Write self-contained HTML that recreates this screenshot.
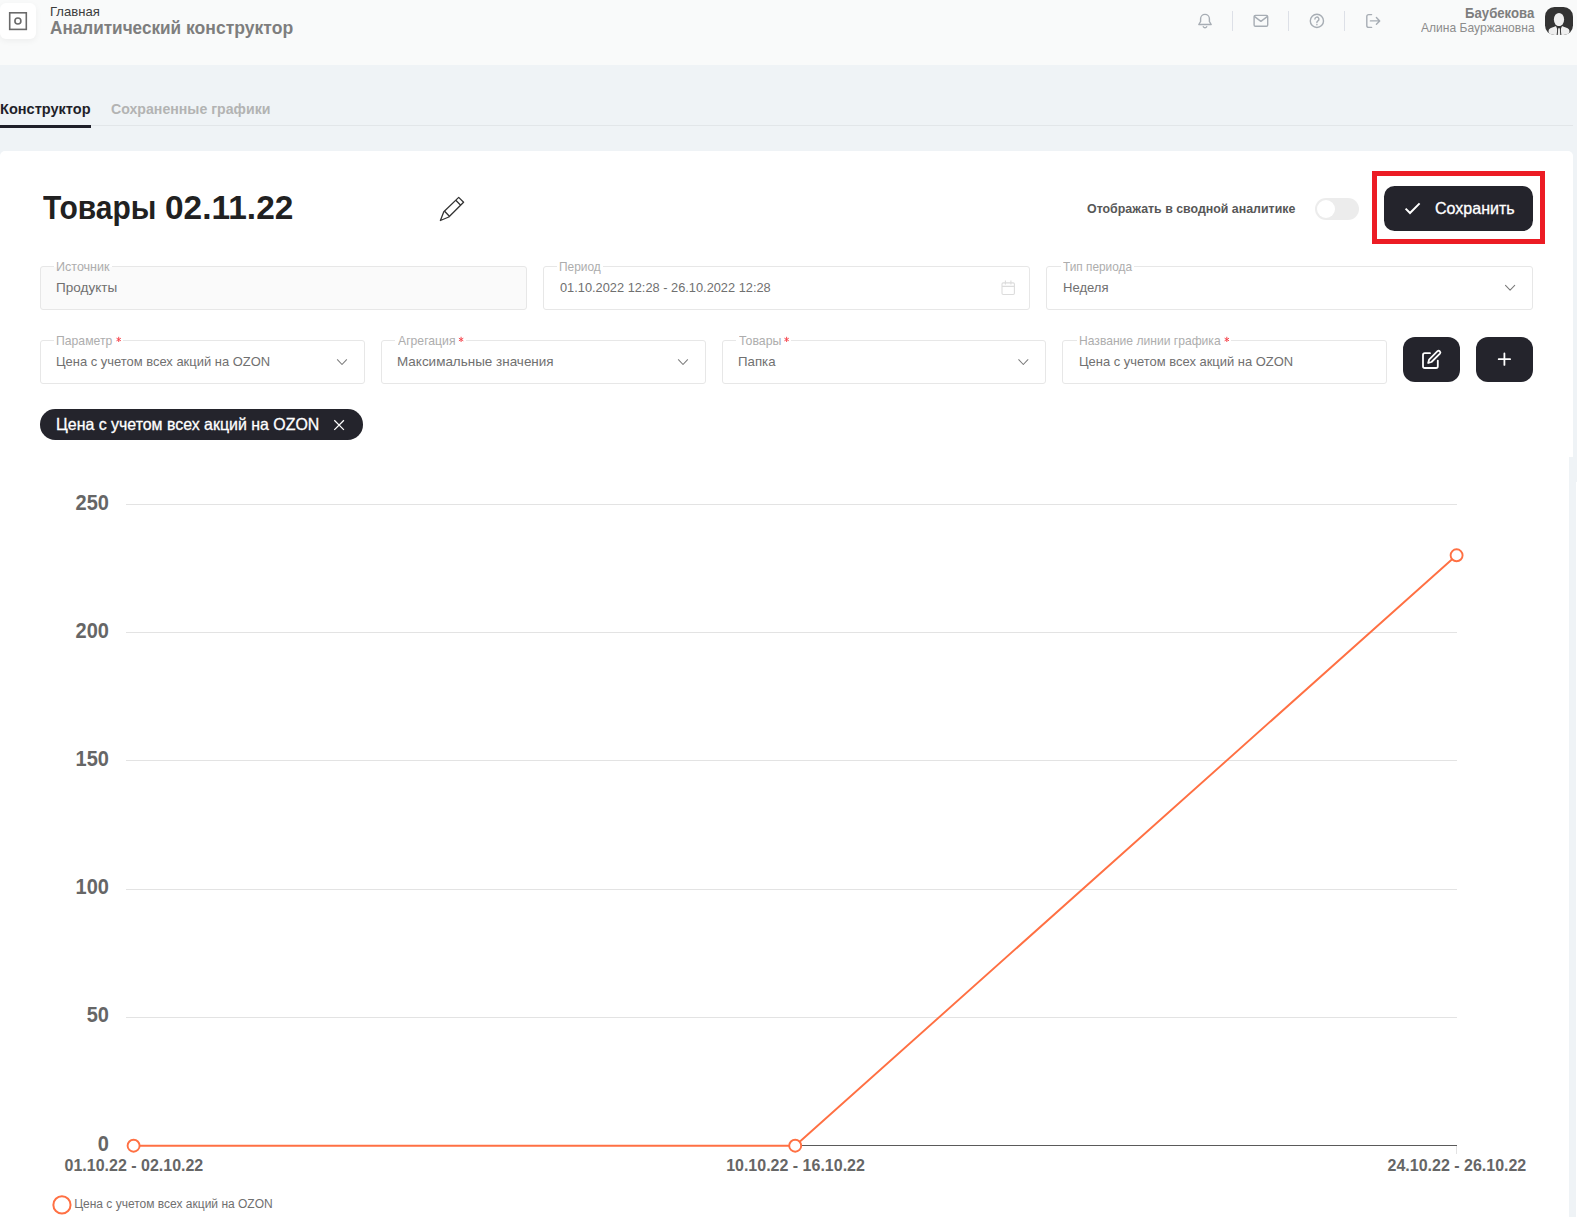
<!DOCTYPE html>
<html lang="ru">
<head>
<meta charset="utf-8">
<title>Аналитический конструктор</title>
<style>
*{box-sizing:border-box;margin:0;padding:0}
html,body{width:1577px;height:1219px;overflow:hidden}
body{position:relative;background:#eff3f6;font-family:"Liberation Sans",sans-serif;color:#666}
.abs{position:absolute}
.t{position:absolute;white-space:nowrap;line-height:1;transform-origin:0 0}
#hdr{position:absolute;left:0;top:0;width:1577px;height:65px;background:#f9fafa}
#logo{position:absolute;left:0;top:3px;width:36px;height:36px;background:#fff;border-radius:6px;box-shadow:0 2px 6px rgba(0,0,0,.05)}
.vdiv{position:absolute;top:11px;width:1px;height:20px;background:#dde0e7}
#tabline{position:absolute;left:0;top:125px;width:1573px;height:1px;background:#e2e6e9}
#tabul{position:absolute;left:0;top:125px;width:91px;height:3px;background:#1f1f29}
#card{position:absolute;left:0;top:151px;width:1573px;height:1068px;background:#fff;border-radius:5px 5px 0 0}
.fld{position:absolute;height:44px;border:1px solid #e7e7e7;border-radius:3px}
.btn{position:absolute;background:#24242c}
#ov{position:absolute;left:0;top:0;pointer-events:none}
</style>
</head>
<body>
<div id="hdr"></div>
<div id="logo"></div>
<div class="vdiv" style="left:1232px"></div>
<div class="vdiv" style="left:1288px"></div>
<div class="vdiv" style="left:1344px"></div>
<div id="tabline"></div>
<div id="tabul"></div>
<div id="card"></div>
<!-- stitched-screenshot artefacts on the right edge -->
<div class="abs" style="left:1569px;top:457px;width:8px;height:762px;background:#eff3f6"></div>
<div class="abs" style="left:1576px;top:482px;width:1px;height:737px;background:#fff"></div>

<div class="abs" style="left:1569px;top:1217px;width:8px;height:2px;background:#fff"></div>
<!-- toggle -->
<div class="abs" style="left:1315px;top:198px;width:44px;height:22px;border-radius:11px;background:#ececec"></div>
<div class="abs" style="left:1317px;top:200px;width:18px;height:18px;border-radius:9px;background:#fff"></div>
<!-- red highlight + save -->
<div class="abs" style="left:1372px;top:171px;width:173px;height:73px;border:5px solid #ec1c24"></div>
<div class="btn" style="left:1384px;top:186px;width:149px;height:45px;border-radius:10.5px"></div>
<!-- fields -->
<div class="fld" style="left:40px;top:266px;width:487px;background:#fafafa"></div>
<div class="abs" style="left:54.4px;top:263px;width:57.3px;height:7px;background:linear-gradient(#fff 50%,#fafafa 50%)"></div>
<div class="fld" style="left:543px;top:266px;width:487px;background:#fff"></div>
<div class="abs" style="left:557.4px;top:263px;width:45.4px;height:7px;background:#fff"></div>
<div class="fld" style="left:1046px;top:266px;width:487px;background:#fff"></div>
<div class="abs" style="left:1060.7px;top:263px;width:73.5px;height:7px;background:#fff"></div>
<div class="fld" style="left:40px;top:340px;width:325px;background:#fff"></div>
<div class="abs" style="left:54.4px;top:337px;width:68.2px;height:7px;background:#fff"></div>
<div class="fld" style="left:381px;top:340px;width:325px;background:#fff"></div>
<div class="abs" style="left:395.0px;top:337px;width:70.6px;height:7px;background:#fff"></div>
<div class="fld" style="left:722px;top:340px;width:324px;background:#fff"></div>
<div class="abs" style="left:735.8px;top:337px;width:55.3px;height:7px;background:#fff"></div>
<div class="fld" style="left:1062px;top:340px;width:325px;background:#fff"></div>
<div class="abs" style="left:1076.6px;top:337px;width:154.6px;height:7px;background:#fff"></div>
<!-- buttons -->
<div class="btn" style="left:1403px;top:337px;width:57px;height:45px;border-radius:12px"></div>
<div class="btn" style="left:1476px;top:337px;width:57px;height:45px;border-radius:12px"></div>
<!-- chip -->
<div class="btn" style="left:40px;top:409.2px;width:323px;height:30.5px;border-radius:15.25px"></div>

<!-- texts -->
<div class="t" style="left:50.30px;top:5.07px;font-size:13.39px;font-weight:400;color:#3c3c3c;transform:scaleX(0.9780)">Главная</div>
<div class="t" style="left:50.24px;top:18.81px;font-size:18.54px;font-weight:700;color:#7e7e7e;transform:scaleX(0.9255)">Аналитический</div>
<div class="t" style="left:185.52px;top:18.81px;font-size:18.54px;font-weight:700;color:#7e7e7e;transform:scaleX(0.9477)">конструктор</div>
<div class="t" style="left:-0.31px;top:101.59px;font-size:14.42px;font-weight:700;color:#1f1f29;transform:scaleX(1.0102)">Конструктор</div>
<div class="t" style="left:110.99px;top:101.59px;font-size:14.42px;font-weight:700;color:#b3b3b3;transform:scaleX(0.9815)">Сохраненные графики</div>
<div class="t" style="left:1464.89px;top:6.19px;font-size:14.42px;font-weight:700;color:#7e7e7e;transform:scaleX(0.9149)">Баубекова</div>
<div class="t" style="left:1420.95px;top:21.27px;font-size:13.39px;font-weight:400;color:#8c8c8c;transform:scaleX(0.9021)">Алина Бауржановна</div>
<div class="t" style="left:42.55px;top:191.62px;font-size:32.34px;font-weight:700;color:#212121;transform:scaleX(0.9271)">Товары</div>
<div class="t" style="left:164.61px;top:191.62px;font-size:32.34px;font-weight:700;color:#212121;transform:scaleX(1.0346)">02.11.22</div>
<div class="t" style="left:1087.24px;top:202.37px;font-size:13.39px;font-weight:700;color:#575757;transform:scaleX(0.9258)">Отображать в сводной аналитике</div>
<div class="t" style="left:1435.05px;top:200.15px;font-size:16.48px;font-weight:400;color:#ffffff;-webkit-text-stroke:0.3px #fff;transform:scaleX(0.9732)">Сохранить</div>
<div class="t" style="left:56.39px;top:260.94px;font-size:12.36px;font-weight:400;color:#adadad;transform:scaleX(1.0145)">Источник</div>
<div class="t" style="left:559.44px;top:260.94px;font-size:12.36px;font-weight:400;color:#adadad;transform:scaleX(0.9638)">Период</div>
<div class="t" style="left:1063.46px;top:260.94px;font-size:12.36px;font-weight:400;color:#adadad;transform:scaleX(0.9575)">Тип периода</div>
<div class="t" style="left:56.41px;top:335.14px;font-size:12.36px;font-weight:400;color:#adadad;transform:scaleX(0.9874)">Параметр</div>
<div class="t" style="left:398.00px;top:335.14px;font-size:12.36px;font-weight:400;color:#adadad;transform:scaleX(0.9865)">Агрегация</div>
<div class="t" style="left:738.55px;top:335.14px;font-size:12.36px;font-weight:400;color:#adadad;transform:scaleX(0.9982)">Товары</div>
<div class="t" style="left:1078.62px;top:335.14px;font-size:12.36px;font-weight:400;color:#adadad;transform:scaleX(0.9788)">Название линии графика</div>
<div class="t" style="left:56.26px;top:281.47px;font-size:13.39px;font-weight:400;color:#707070;transform:scaleX(1.0124)">Продукты</div>
<div class="t" style="left:559.92px;top:281.47px;font-size:13.39px;font-weight:400;color:#707070;transform:scaleX(0.9571)">01.10.2022 12:28 - 26.10.2022 12:28</div>
<div class="t" style="left:1062.60px;top:281.47px;font-size:13.39px;font-weight:400;color:#707070;transform:scaleX(0.9770)">Неделя</div>
<div class="t" style="left:56.31px;top:355.27px;font-size:13.39px;font-weight:400;color:#707070;transform:scaleX(0.9676)">Цена с учетом всех акций на OZON</div>
<div class="t" style="left:396.87px;top:355.27px;font-size:13.39px;font-weight:400;color:#707070;transform:scaleX(1.0063)">Максимальные значения</div>
<div class="t" style="left:737.79px;top:355.27px;font-size:13.39px;font-weight:400;color:#707070;transform:scaleX(0.9905)">Папка</div>
<div class="t" style="left:1078.51px;top:355.27px;font-size:13.39px;font-weight:400;color:#707070;transform:scaleX(0.9680)">Цена с учетом всех акций на OZON</div>
<div class="t" style="left:56.47px;top:416.45px;font-size:16.48px;font-weight:400;color:#ffffff;-webkit-text-stroke:0.3px #fff;transform:scaleX(0.9665)">Цена с учетом всех акций на OZON</div>
<div class="t" style="left:74.20px;top:1198.34px;font-size:12px;font-weight:400;color:#707070;transform:scaleX(1.0000)">Цена с учетом всех акций на OZON</div>

<svg id="ov" width="1577" height="1219" viewBox="0 0 1577 1219">
<!-- logo -->
<rect x="9.7" y="12.8" width="16.6" height="16.6" fill="none" stroke="#6a6a6a" stroke-width="1.6"/>
<circle cx="17.9" cy="21" r="3" fill="none" stroke="#6a6a6a" stroke-width="1.6"/>
<!-- header icons -->
<g fill="none" stroke="#a7adb4" stroke-width="1.4" stroke-linecap="round" stroke-linejoin="round">
<path d="M1198.8 24.5L1200.6 21.5V18.8a4.4 4.4 0 0 1 8.8 0V21.5L1211.2 24.5Z"/>
<path d="M1203.3 26.7a1.9 1.9 0 0 0 3.4 0"/>
<rect x="1254.1" y="15.4" width="13.6" height="10.9" rx="1.3"/>
<path d="M1254.6 16.6L1260.9 21.4L1267.2 16.6"/>
<circle cx="1316.9" cy="20.9" r="6.6"/>
<path d="M1314.9 19.1a2 2 0 1 1 3 1.7c-.7 .4-1 .8-1 1.5v.3"/>
<path d="M1316.9 24.5v.3"/>
<path d="M1371.6 14.6h-2.8a2 2 0 0 0-2 2v8.8a2 2 0 0 0 2 2h2.8"/>
<path d="M1370.4 20.9h9.2M1376.4 17.5l3.3 3.4l-3.3 3.4"/>
</g>
<!-- avatar -->
<rect x="1545" y="7" width="28" height="28" rx="9.5" fill="#333"/>
<clipPath id="av"><rect x="1545" y="7" width="28" height="28" rx="9.5"/></clipPath>
<g clip-path="url(#av)">
<ellipse cx="1559" cy="19.6" rx="5.1" ry="6.7" fill="#eee"/>
<path d="M1548.6 36v-5.2c0-1.6 1.2-2.4 3-3l4.6-1.8l2.8 9l2.8-9l4.6 1.8c1.8 .6 3 1.4 3 3V36Z" fill="#eee"/>
<path d="M1556.2 26h5.6l-1.2 2.4l.9 7.6h-5l.9-7.6Z" fill="#333"/>
<path d="M1558.2 28.2h1.6l.5 6.8h-2.6Z" fill="#eee"/>
</g>
<!-- title pencil -->
<g fill="none" stroke="#333" stroke-width="1.3" stroke-linejoin="round">
<path d="M440.4 220.5L443.8 211.8L458.7 197.4L463.6 202.3L448.8 217Z"/>
<path d="M455.8 200.3L460.7 205.2M444.6 211.2L449.4 216.2"/>
</g>
<!-- save check -->
<path d="M1405.6 208.6L1410 213L1419.6 203.4" fill="none" stroke="#fff" stroke-width="1.95"/>
<!-- calendar -->
<g fill="none" stroke="#dcdcdc" stroke-width="1.1">
<rect x="1002" y="282.9" width="12.4" height="11.6" rx="1.2"/>
<path d="M1002 286.4h12.4M1005.4 280.6v4M1010.9 280.6v4"/>
</g>
<path d="M1505.5 285.4L1510.1 290.2L1514.7 285.4" stroke="#7a7a7a" stroke-width="1.05" fill="none" stroke-linecap="round" stroke-linejoin="round"/>
<path d="M337.4 359.7L342.0 364.5L346.6 359.7" stroke="#7a7a7a" stroke-width="1.05" fill="none" stroke-linecap="round" stroke-linejoin="round"/>
<path d="M678.4 359.7L683.0 364.5L687.6 359.7" stroke="#7a7a7a" stroke-width="1.05" fill="none" stroke-linecap="round" stroke-linejoin="round"/>
<path d="M1018.7 359.7L1023.3 364.5L1027.9 359.7" stroke="#7a7a7a" stroke-width="1.05" fill="none" stroke-linecap="round" stroke-linejoin="round"/>
<path d="M118.7 336.8v5.2M116.5 338.2l4.4 2.6M120.9 338.2l-4.4 2.6" stroke="#f5434c" stroke-width="0.95" fill="none"/>
<path d="M461.1 336.8v5.2M458.9 338.2l4.4 2.6M463.3 338.2l-4.4 2.6" stroke="#f5434c" stroke-width="0.95" fill="none"/>
<path d="M786.6 336.8v5.2M784.4 338.2l4.4 2.6M788.8 338.2l-4.4 2.6" stroke="#f5434c" stroke-width="0.95" fill="none"/>
<path d="M1226.8 336.8v5.2M1224.6 338.2l4.4 2.6M1229.0 338.2l-4.4 2.6" stroke="#f5434c" stroke-width="0.95" fill="none"/>
<!-- edit & plus button icons -->
<g fill="none" stroke="#fff" stroke-width="1.8" stroke-linecap="round" stroke-linejoin="round">
<path d="M1430 353.2h-5.2a1.8 1.8 0 0 0-1.8 1.8v11.2a1.8 1.8 0 0 0 1.8 1.8h11.2a1.8 1.8 0 0 0 1.8-1.8v-5.6"/>
<path d="M1428.2 363l.9-3.4l8.4-8.4a1.7 1.7 0 0 1 2.4 2.4l-8.4 8.4Z"/>
<path d="M1504.4 353.5v11.4M1498.7 359.2h11.4"/>
</g>
<!-- chip close -->
<path d="M334.3 420.3l9.6 9.6M343.9 420.3l-9.6 9.6" stroke="#fff" stroke-width="1.25" fill="none"/>
<!-- chart -->

<rect x="126" y="504" width="1331" height="1" fill="#e3e3e3"/>
<rect x="126" y="632" width="1331" height="1" fill="#e3e3e3"/>
<rect x="126" y="760" width="1331" height="1" fill="#e3e3e3"/>
<rect x="126" y="889" width="1331" height="1" fill="#e3e3e3"/>
<rect x="126" y="1017" width="1331" height="1" fill="#e3e3e3"/>
<rect x="127" y="1145" width="1330" height="1" fill="#5a5a5a"/>
<rect x="1456" y="1146" width="1" height="8" fill="#e3e3e3"/>
<polyline points="133.6,1145.7 795.2,1145.7 1456.6,555.3" fill="none" stroke="#ff7043" stroke-width="1.9" stroke-linejoin="round"/>
<circle cx="133.6" cy="1145.7" r="6" fill="#fff" stroke="#ff7043" stroke-width="1.9"/>
<circle cx="795.2" cy="1145.7" r="6" fill="#fff" stroke="#ff7043" stroke-width="1.9"/>
<circle cx="1456.6" cy="555.3" r="6" fill="#fff" stroke="#ff7043" stroke-width="1.9"/>
<g font-family="Liberation Sans, sans-serif">
<text transform="translate(108.9 509.5) scale(1 1.09)" text-anchor="end" font-size="20" font-weight="700" fill="#666">250</text>
<text transform="translate(108.9 637.7) scale(1 1.09)" text-anchor="end" font-size="20" font-weight="700" fill="#666">200</text>
<text transform="translate(108.9 765.9) scale(1 1.09)" text-anchor="end" font-size="20" font-weight="700" fill="#666">150</text>
<text transform="translate(108.9 894.1) scale(1 1.09)" text-anchor="end" font-size="20" font-weight="700" fill="#666">100</text>
<text transform="translate(108.9 1022.3) scale(1 1.09)" text-anchor="end" font-size="20" font-weight="700" fill="#666">50</text>
<text transform="translate(108.9 1150.5) scale(1 1.09)" text-anchor="end" font-size="20" font-weight="700" fill="#666">0</text>
<text transform="translate(133.9 1171) scale(1 1.03)" text-anchor="middle" font-size="16" font-weight="700" fill="#666">01.10.22 - 02.10.22</text>
<text transform="translate(795.5 1171) scale(1 1.03)" text-anchor="middle" font-size="16" font-weight="700" fill="#666">10.10.22 - 16.10.22</text>
<text transform="translate(1456.9 1171) scale(1 1.03)" text-anchor="middle" font-size="16" font-weight="700" fill="#666">24.10.22 - 26.10.22</text>
</g>
<circle cx="61.95" cy="1204.9" r="8.6" fill="#fff" stroke="#ff7043" stroke-width="2"/>

</svg>
</body>
</html>
